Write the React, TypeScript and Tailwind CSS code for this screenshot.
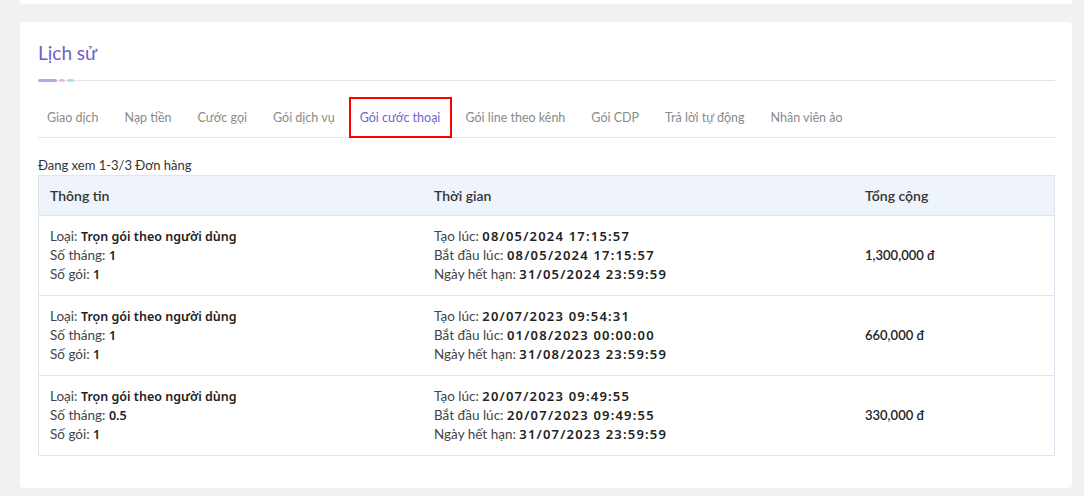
import React from "react";

const tabs = [
    "Giao dịch",
    "Nạp tiền",
    "Cước gọi",
    "Gói dịch vụ",
    "Gói cước thoại",
    "Gói line theo kênh",
    "Gói CDP",
    "Trả lời tự động",
    "Nhân viên ảo",
];

const orders = [
    {
        loai: "Trọn gói theo người dùng",
        thang: "1",
        goi: "1",
        tao: "08/05/2024 17:15:57",
        batDau: "08/05/2024 17:15:57",
        hetHan: "31/05/2024 23:59:59",
        tong: "1,300,000 đ",
    },
    {
        loai: "Trọn gói theo người dùng",
        thang: "1",
        goi: "1",
        tao: "20/07/2023 09:54:31",
        batDau: "01/08/2023 00:00:00",
        hetHan: "31/08/2023 23:59:59",
        tong: "660,000 đ",
    },
    {
        loai: "Trọn gói theo người dùng",
        thang: "0.5",
        goi: "1",
        tao: "20/07/2023 09:49:55",
        batDau: "20/07/2023 09:49:55",
        hetHan: "31/07/2023 23:59:59",
        tong: "330,000 đ",
    },
];

function Line({ label, value, date }: { label: string; value: string; date?: boolean }) {
    return (
        <p className="leading-[19px]">
            {label}:{" "}
            <span
                className={
                    "font-semibold text-[#222] font-['Noto_Sans',sans-serif] " +
                    (date ? "text-[13px] tracking-[1.2px]" : "text-[12.5px]")
                }
            >
                {value}
            </span>
        </p>
    );
}

export default function App() {
    const active = "Gói cước thoại";
    return (
        <div className="min-h-[496px] bg-[#f1f1f1] pl-[20px] pr-[12px] font-['Lato','Noto_Sans',sans-serif]">
            <div className="h-[4px] bg-white rounded-b-[3px]" />
            <div className="mt-[18px] bg-white rounded-[4px] pl-[18px] pr-[17px] pt-[19px] pb-[32px]">
                <h2 className="text-[19px] leading-[24px] text-[#6a5fc8]">Lịch sử</h2>
                <div className="mt-[14px] relative h-[3px] flex items-center">
                    <div className="absolute inset-x-0 top-[1px] h-px bg-[#e4e4e4]" />
                    <div className="relative flex gap-[2px]">
                        <span className="w-[19px] h-[3px] rounded-full bg-[#b4a9e6]" />
                        <span className="w-[6px] h-[3px] rounded-full bg-[#f7b6df]" />
                        <span className="w-[7px] h-[3px] rounded-full bg-[#a3e2f4]" />
                    </div>
                </div>
                <div className="mt-[15px] flex gap-[8px] border-b border-[#e4e4e4]">
                    {tabs.map((t) => (
                        <div
                            key={t}
                            className={
                                "h-[41px] -mb-px pt-px flex items-center border-2 text-[12.5px] " +
                                (t === active
                                    ? "border-[#f00] text-[#6f64cc] pl-[9px] pr-[10px] -ml-[3px] -mr-[4px]"
                                    : "border-transparent text-[#8a8a8a] px-[7px]")
                            }
                        >
                            {t}
                        </div>
                    ))}
                </div>
                <p className="mt-[18px] text-[13px] leading-[18px] text-[#333]">
                    Đang xem 1-3/3 Đơn hàng
                </p>
                <div className="mt-px border border-[#dce6f2] text-[13.5px] text-[#444]">
                    <div className="grid grid-cols-[384px_431px_1fr] h-[40px] items-center bg-[#eff3fb] border-b border-[#dce6f2] font-semibold text-[14px] text-[#333]">
                        <div className="pl-[11px]">Thông tin</div>
                        <div className="pl-[11px]">Thời gian</div>
                        <div className="pl-[11px]">Tổng cộng</div>
                    </div>
                    {orders.map((o, i) => (
                        <div
                            key={i}
                            className={
                                "grid grid-cols-[384px_431px_1fr] items-center pt-[11px] pb-[11px] " +
                                (i < orders.length - 1 ? "border-b border-[#dce6f2]" : "")
                            }
                        >
                            <div className="pl-[11px]">
                                <Line label="Loại" value={o.loai} />
                                <Line label="Số tháng" value={o.thang} />
                                <Line label="Số gói" value={o.goi} />
                            </div>
                            <div className="pl-[11px]">
                                <Line label="Tạo lúc" value={o.tao} date />
                                <Line label="Bắt đầu lúc" value={o.batDau} date />
                                <Line label="Ngày hết hạn" value={o.hetHan} date />
                            </div>
                            <div className="pl-[11px] font-semibold text-[#222] text-[13px]">{o.tong}</div>
                        </div>
                    ))}
                </div>
            </div>
        </div>
    );
}
